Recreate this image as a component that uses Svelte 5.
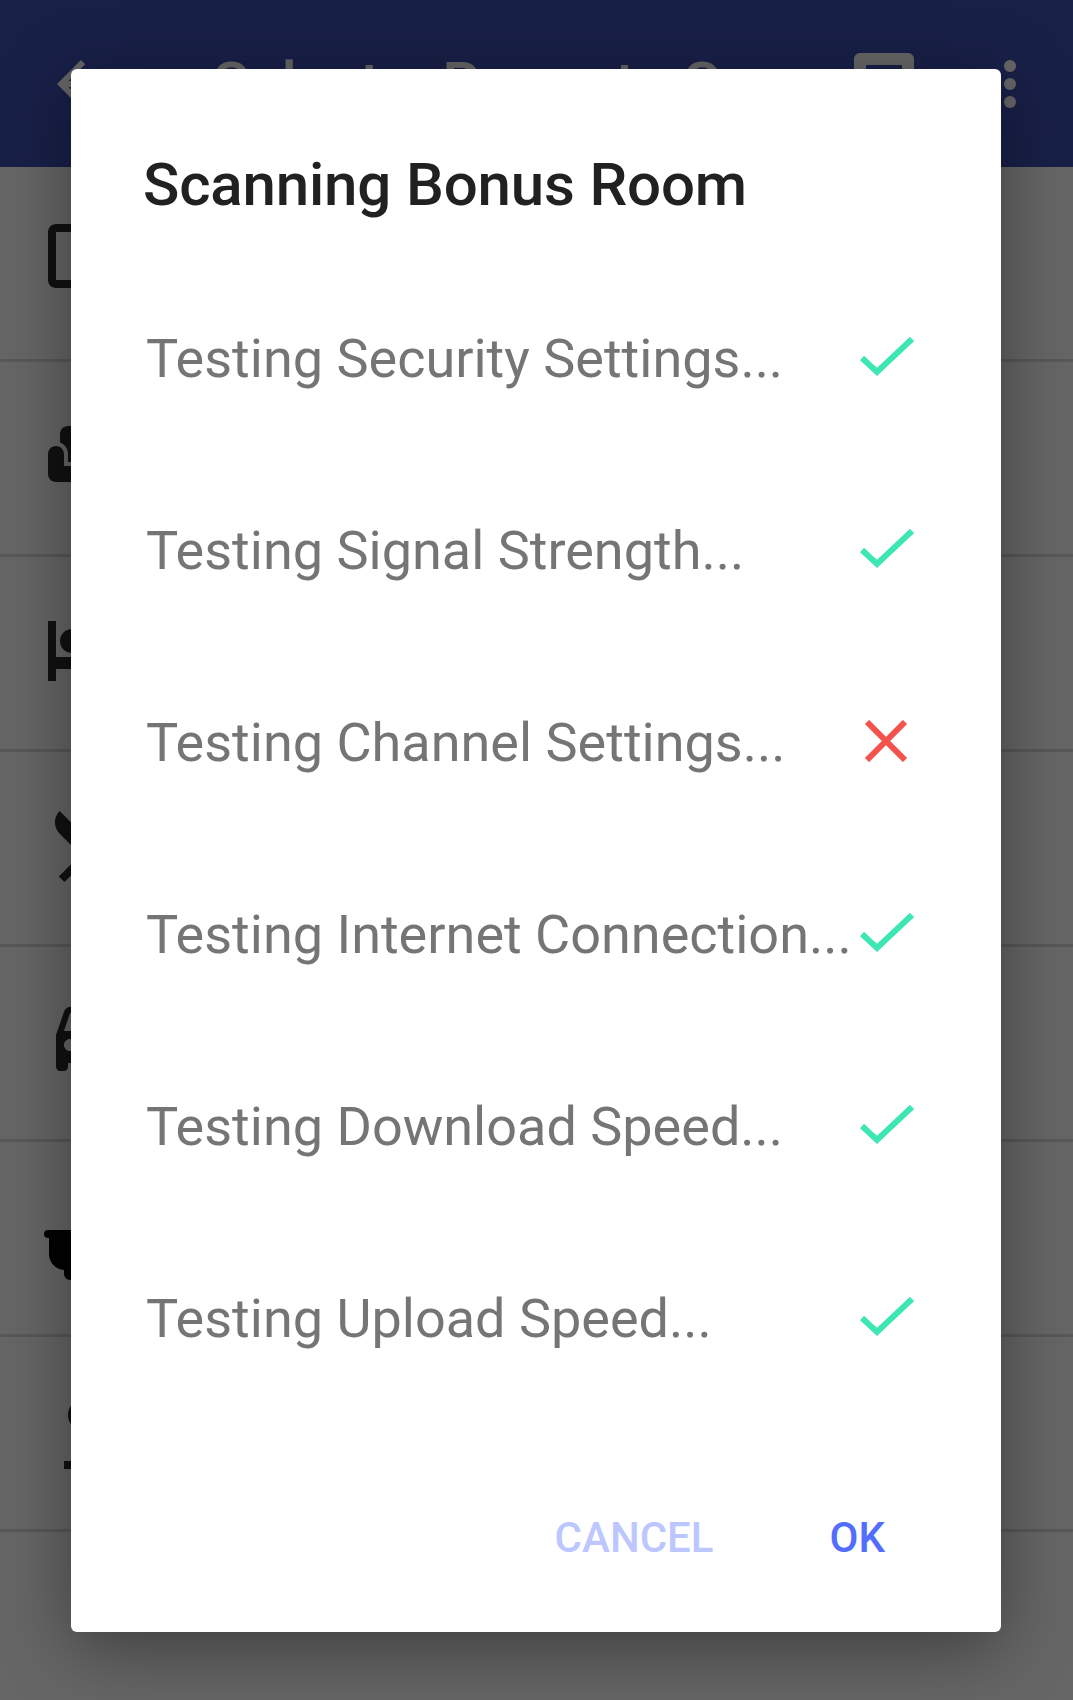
<script>
  const rows = [
    { label: "Testing Security Settings...", ok: true },
    { label: "Testing Signal Strength...", ok: true },
    { label: "Testing Channel Settings...", ok: false },
    { label: "Testing Internet Connection...", ok: true },
    { label: "Testing Download Speed...", ok: true },
    { label: "Testing Upload Speed...", ok: true },
  ];
  // rooms behind the scrim, mostly hidden by the dialog
  const rooms = [
    { top: 45, d: "M21 3H3c-1.1 0-2 .9-2 2v12c0 1.1.9 2 2 2h5v2h8v-2h5c1.1 0 1.99-.9 1.99-2L23 5c0-1.1-.9-2-2-2zm0 14H3V5h18v12z" },
    { top: 44, d: "M21 10c-1.1 0-2 .9-2 2v3H5v-3c0-1.1-.9-2-2-2s-2 .9-2 2v5c0 1.1.9 2 2 2h18c1.1 0 2-.9 2-2v-5c0-1.1-.9-2-2-2zm-3-5H6c-1.1 0-2 .9-2 2v2.15c1.16.41 2 1.52 2 2.81V14h12v-2.03c0-1.3.84-2.4 2-2.81V7c0-1.1-.9-2-2-2z" },
    { top: 44, d: "M7 13c1.66 0 3-1.34 3-3S8.66 7 7 7s-3 1.34-3 3 1.34 3 3 3zm12-6h-8v7H3V5H1v15h2v-3h18v3h2v-9c0-2.21-1.79-4-4-4z" },
    { top: 45, d: "M8.1 13.34l2.83-2.83L3.91 3.5c-1.56 1.56-1.56 4.09 0 5.66l4.19 4.18zm6.78-1.81c1.53.71 3.68.21 5.27-1.38 1.91-1.91 2.28-4.65.81-6.12-1.46-1.46-4.2-1.1-6.12.81-1.59 1.59-2.09 3.74-1.38 5.27L3.7 19.87l1.41 1.41L12 14.41l6.88 6.88 1.41-1.41L13.41 13l1.47-1.47z" },
    { top: 40, d: "M18.92 6.01C18.72 5.42 18.16 5 17.5 5h-11c-.66 0-1.21.42-1.42 1.01L3 12v8c0 .55.45 1 1 1h1c.55 0 1-.45 1-1v-1h12v1c0 .55.45 1 1 1h1c.55 0 1-.45 1-1v-8l-2.08-5.99zM6.5 16c-.83 0-1.5-.67-1.5-1.5S5.67 13 6.5 13s1.5.67 1.5 1.5S7.33 16 6.5 16zm11 0c-.83 0-1.5-.67-1.5-1.5s.67-1.5 1.5-1.5 1.5.67 1.5 1.5-.67 1.5-1.5 1.5zM5 11l1.5-4.5h11L19 11H5z" },
    { top: 48, dark: true, d: "M1 10h22a1 1 0 0 1 0 2h-1v5a4 4 0 0 1-4 3v1a1.5 1.5 0 0 1-3 0v-1H8v1a1.5 1.5 0 0 1-3 0v-1a4 4 0 0 1-3.75-4v-4H1a1 1 0 0 1 0-2z" },
    { top: 44, d: "M9 5c1.7 0 3 1.6 3 3.5S10.7 12 9 12 6 10.400 6 8.500 7.300 5 9 5zM5 20h14v2H5z" },
  ];
</script>

<div class="screen">
  <header class="appbar">
    <svg class="back" viewBox="0 0 24 24"><path d="M20 11H7.830l5.590-5.590L12 4l-8 8 8 8 1.410-1.410L7.830 13H20v-2z" fill="#fff" /></svg>
    <span class="title">Select a Room to Scan</span>
    <span class="square"></span>
    <span class="dots"><i></i><i></i><i></i></span>
  </header>
  <div class="list">
    {#each rooms as room}
      <div class="room">
        <svg class="room-icon" style:margin-top="{room.top}px" viewBox="0 0 24 24">
          <path d={room.d} fill={room.dark ? "#050505" : "#2b2b2b"} />
        </svg>
      </div>
    {/each}
  </div>

  <div class="scrim"></div>

  <div class="dialog">
    <h1>Scanning Bonus Room</h1>
    <ul>
      {#each rows as row}
        <li>
          <span class="label">{row.label}</span>
          {#if row.ok}
            <svg class="mark" viewBox="0 0 54 42"><path d="M2 22 17 36 52 3" fill="none" stroke="#3fe6b5" stroke-width="6" /></svg>
          {:else}
            <svg class="mark" viewBox="0 0 54 42"><path d="M7 2 45 40M45 2 7 40" fill="none" stroke="#f4524d" stroke-width="6" /></svg>
          {/if}
        </li>
      {/each}
    </ul>
    <div class="actions">
      <span class="cancel">CANCEL</span>
      <span class="ok">OK</span>
    </div>
  </div>
</div>

<style>
  :global(body) {
    margin: 0;
    font-family: Roboto, "Liberation Sans", sans-serif;
  }
  .screen {
    position: relative;
    width: 1073px;
    height: 1700px;
    overflow: hidden;
    background: #fff;
  }
  .appbar {
    height: 167px;
    background: #3f51b5;
    display: flex;
    align-items: center;
    padding: 0 57px 0 45px;
    box-sizing: border-box;
    color: #fff;
  }
  .back {
    width: 72px;
    height: 72px;
    flex: none;
  }
  .title {
    margin-left: 96px;
    font-size: 60px;
    font-weight: 500;
    flex: 1;
    white-space: nowrap;
  }
  .square {
    width: 60px;
    height: 60px;
    margin-bottom: 1px;
    border: 12px solid #fff;
    box-sizing: border-box;
    border-radius: 6px;
  }
  .dots {
    margin-left: 90px;
    display: flex;
    flex-direction: column;
    gap: 6px;
  }
  .dots i {
    width: 12px;
    height: 12px;
    border-radius: 50%;
    background: #fff;
  }
  .list {
    display: flex;
    flex-direction: column;
  }
  .room {
    height: 195px;
    box-sizing: border-box;
    border-bottom: 3px solid #ddd;
    padding-left: 44px;
    display: flex;
    align-items: flex-start;
  }
  .room-icon {
    width: 96px;
    height: 96px;
  }
  .scrim {
    position: absolute;
    inset: 0;
    background: rgba(0, 0, 0, 0.6);
  }
  .dialog {
    position: absolute;
    left: 71px;
    top: 69px;
    width: 930px;
    height: 1563px;
    background: #fff;
    border-radius: 6px;
    box-shadow: 0 16px 72px rgba(0, 0, 0, 0.4);
    display: flex;
    flex-direction: column;
    box-sizing: border-box;
  }
  h1 {
    margin: 0;
    padding: 81px 0 0 72px;
    font-size: 60px;
    line-height: 70px;
    font-weight: 500;
    letter-spacing: -0.16px;
    color: #212121;
  }
  ul {
    list-style: none;
    margin: 42px 0 0;
    padding: 0 0 0 75px;
    display: flex;
    flex-direction: column;
  }
  li {
    height: 192px;
    display: flex;
    align-items: center;
    justify-content: space-between;
  }
  .label {
    font-size: 54px;
    color: #757575;
    white-space: nowrap;
  }
  .mark {
    width: 54px;
    height: 42px;
    margin: 0 87px 2px 0;
    flex: none;
  }
  .actions {
    margin-top: auto;
    padding: 0 116px 70px 0;
    display: flex;
    justify-content: flex-end;
    gap: 116px;
    font-size: 42px;
    font-weight: 500;
  }
  .cancel {
    color: #bcc7ff;
  }
  .ok {
    color: #536dfe;
  }
</style>
